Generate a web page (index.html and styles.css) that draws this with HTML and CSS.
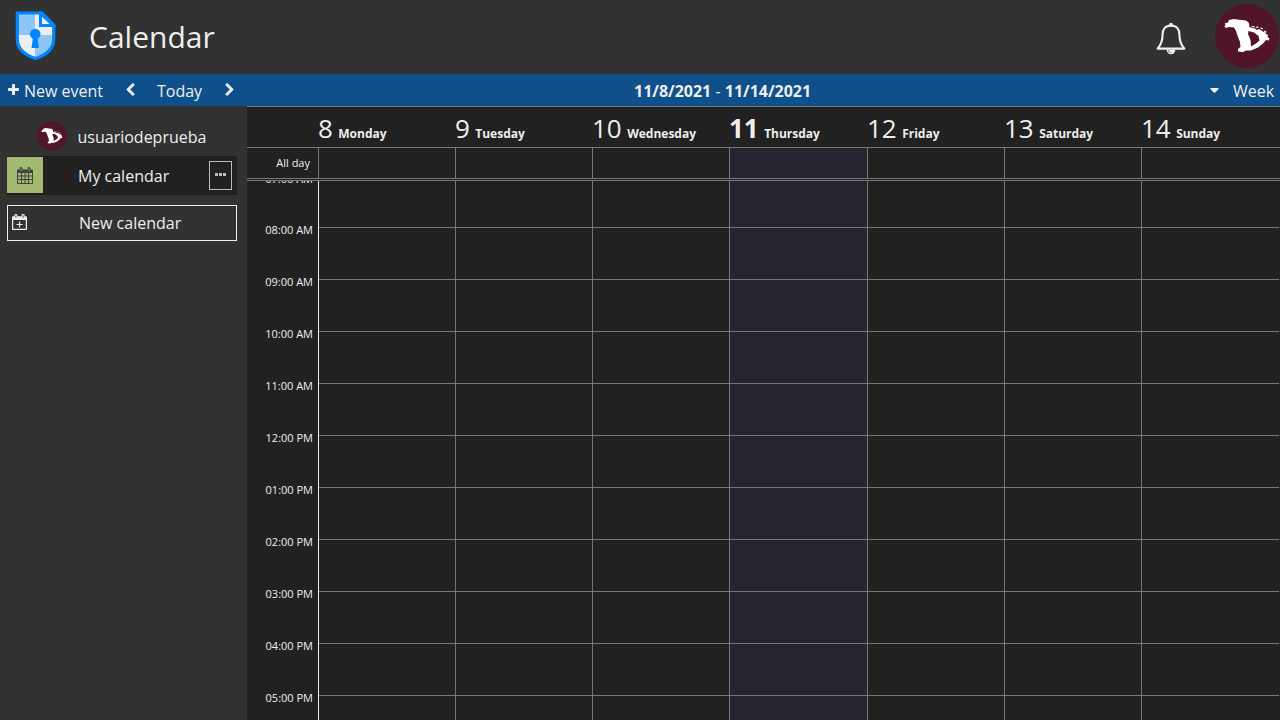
FILE: index.html
```html
<!DOCTYPE html>
<html lang="en">
<head>
<meta charset="utf-8">
<title>Calendar</title>
<link rel="stylesheet" href="styles.css">
</head>
<body>
<svg class="defs" aria-hidden="true">
  <symbol id="avatar" viewBox="0 0 64 64">
    <circle cx="32" cy="32" r="32" fill="#51152b"/>
    <path fill="#fff" fill-rule="evenodd" d="M9.500 22.500L10.500 20.500 9.500 19.500 13 18.500 14 16 19 15 26 16 31 16.500 33.500 18.500 34.500 21 34 23 40 24.500 42 26 44 25 47 27 50 28.500 51 30 53 31 52.500 33 54.500 34.500 53.500 36.500 51 36 48 39.500 43 43.500 36 46.500 31 46.500 28 48 23 47.500 23 45 25.500 43 25 38 23 33 21 27 19 23.500 14 23 11 24ZM33.500 27L33 30 35.500 36 36 42.500 41 39.500 44.500 36.500 43.500 32 39 28.500Z"/>
    <path fill="#fff" d="M36 22l4 .5v1l-3-.5zM41 23l2-.8.5 1.500-2 .3zM45 23.500l2.500.5.500 1.500-2-.5zM49 26.500l2 .5.500 2-2-.7z"/>
  </symbol>
</svg>
<header class="top">
  <svg class="logo" viewBox="0 0 41 50">
    <path d="M2 2H27L39 14V29Q39 41 20.500 47.500Q2 41 2 29Z" fill="#eee"/>
    <path d="M2 2H20V24H2ZM20 24H39V29Q39 41 20 47.500Z" fill="#8fc5f5"/>
    <path d="M2.300 2H27L38.700 14V28C38.700 38 31 44 20.500 47.500C10 44 2.300 38 2.300 28Z" fill="none" stroke="#0087ff" stroke-width="3.200"/>
    <path d="M25.500 2.500V14.500H38.500Z" fill="#eee" stroke="#0087ff" stroke-width="3"/>
    <circle cx="20.200" cy="23" r="5.300" fill="#0087ff"/>
    <path d="M18 26h4.500l1.300 11h-7.300z" fill="#0087ff"/>
  </svg>
  <h1 class="title">Calendar</h1>
  <svg class="bell" viewBox="0 0 30 33">
    <path d="M15 3.600C9 3.600 6.600 7.500 6.600 12.500C6.600 19 5 23 1.600 26.600H28.400C25 23 23.400 19 23.400 12.500C23.400 7.500 21 3.600 15 3.600Z" fill="none" stroke="#eee" stroke-width="2.100" stroke-linejoin="round"/>
    <circle cx="15" cy="2.600" r="1.900" fill="#eee"/>
    <path d="M10.600 27.500h8.800a4.400 4.800 0 0 1-8.800 0z" fill="#eee"/>
    <path d="M12.300 28q.3 2.500 2.700 2.700" stroke="#323232" fill="none" stroke-width=".6"/>
  </svg>
  <svg class="avatar"><use href="#avatar"/></svg>
</header>
<nav class="toolbar">
  <svg class="plus" viewBox="192 128 1408 1408"><path d="M1600 736v192q0 40-28 68t-68 28h-416v416q0 40-28 68t-68 28h-192q-40 0-68-28t-28-68v-416h-416q-40 0-68-28t-28-68v-192q0-40 28-68t68-28h416v-416q0-40 28-68t68-28h192q40 0 68 28t28 68v416h416q40 0 68 28t28 68z"/></svg>
  <span class="new-event">New event</span>
  <svg class="prev" viewBox="410 26 1036 1612"><path d="M1427 301l-531 531 531 531q19 19 19 45t-19 45l-166 166q-19 19-45 19t-45-19l-742-742q-19-19-19-45t19-45l742-742q19-19 45-19t45 19l166 166q19 19 19 45t-19 45z"/></svg>
  <span class="today">Today</span>
  <svg class="next" viewBox="346 26 1036 1612"><path d="M1363 877l-742 742q-19 19-45 19t-45-19l-166-166q-19-19-19-45t19-45l531-531-531-531q-19-19-19-45t19-45l166-166q19-19 45-19t45 19l742 742q19 19 19 45t-19 45z"/></svg>
  <span class="range"><b>11/8/2021</b> - <b>11/14/2021</b></span>
  <svg class="caret" viewBox="0 0 9 5"><path d="M.8 0H8.200Q9 .2 8.600.9L5 4.700Q4.500 5 4 4.700L.4.900Q0 .2.800 0z"/></svg>
  <span class="view">Week</span>
</nav>
<div class="body">
  <aside class="side">
    <div class="user"><svg class="mini"><use href="#avatar"/></svg><span>usuariodeprueba</span></div>
    <div class="cal">
      <span class="swatch"><svg class="cal-icon" viewBox="0 0 16 17">
        <path fill="#424242" fill-rule="evenodd" d="M1 2.500H2.500V1.500Q2.500 0 4 0T5.500 1.500V2.500H10.500V1.500Q10.500 0 12 0T13.500 1.500V2.500H15Q16 2.500 16 3.500V16Q16 17 15 17H1Q0 17 0 16V3.500Q0 2.500 1 2.500ZM1 6V8.500H4V6ZM5 6V8.500H7.500V6ZM8.500 6V8.500H11V6ZM12 6V8.500H15V6ZM1 9.500V12H4V9.500ZM5 9.500V12H7.500V9.500ZM8.500 9.500V12H11V9.500ZM12 9.500V12H15V9.500ZM1 13V16H4V13ZM5 13V16H7.500V13ZM8.500 13V16H11V13ZM12 13V16H15V13ZM3.600 1.200V4H4.400V1.200ZM11.600 1.200V4H12.400V1.200Z"/>
      </svg></span>
      <span class="cal-name">My calendar</span>
      <span class="more"><i></i><i></i><i></i></span>
    </div>
    <div class="new-cal">
      <svg class="add-icon" viewBox="0 0 15 16">
        <path fill="#eee" fill-rule="evenodd" d="M1 2.300H2.300V1.400Q2.300 0 3.900 0T5.500 1.400V2.300H9.500V1.400Q9.500 0 11.100 0T12.700 1.400V2.300H14Q15 2.300 15 3.300V15Q15 16 14 16H1Q0 16 0 15V3.300Q0 2.300 1 2.300ZM1.200 6V14.800H13.800V6ZM3.500 1.300V4H4.300V1.300ZM10.700 1.300V4H11.500V1.300Z"/>
        <path fill="#eee" d="M7 7.500h1.100v2.400h2.500V11H8.100v2.500H7V11H4.500V9.900H7z"/>
      </svg>
      <span>New calendar</span>
    </div>
  </aside>
  <main class="week">
    <div class="row days">
      <div></div>
      <div class="day"><span class="num">8</span><span class="name">Monday</span></div>
      <div class="day"><span class="num">9</span><span class="name">Tuesday</span></div>
      <div class="day"><span class="num">10</span><span class="name">Wednesday</span></div>
      <div class="day now"><span class="num">11</span><span class="name">Thursday</span></div>
      <div class="day"><span class="num">12</span><span class="name">Friday</span></div>
      <div class="day"><span class="num">13</span><span class="name">Saturday</span></div>
      <div class="day"><span class="num">14</span><span class="name">Sunday</span></div>
    </div>
    <div class="row allday">
      <div class="label">All day</div>
      <div class="cell"></div><div class="cell"></div><div class="cell"></div><div class="cell now"></div><div class="cell"></div><div class="cell"></div><div class="cell"></div>
    </div>
    <div class="gap"></div>
    <div class="row grid">
      <div class="hours">
        <span>07:00 AM</span><span>08:00 AM</span><span>09:00 AM</span><span>10:00 AM</span><span>11:00 AM</span><span>12:00 PM</span><span>01:00 PM</span><span>02:00 PM</span><span>03:00 PM</span><span>04:00 PM</span><span>05:00 PM</span>
      </div>
      <div class="col first"></div><div class="col"></div><div class="col"></div><div class="col now"></div><div class="col"></div><div class="col"></div><div class="col last"></div>
    </div>
  </main>
</div>
</body>
</html>
```
FILE: styles.css
```css
* { box-sizing: border-box; }
body { margin: 0; width: 1280px; height: 720px; overflow: hidden; display: flex; flex-direction: column; background: #212121; color: #eee; font: 16px/24px "Open Sans", sans-serif; }
svg { display: block; flex: none; }
.defs { display: none; }
.top { height: 74px; flex: none; display: flex; align-items: flex-start; background: #323232; }
.logo { width: 41px; height: 50px; margin: 11px 0 0 15px; }
.title { margin: 15px 0 0 33px; font-size: 30px; font-weight: 400; line-height: 44px; }
.bell { width: 30px; height: 33px; margin: 22px 29px 0 auto; }
.avatar { width: 64px; height: 64px; margin: 4px 1px 0 0; }
.toolbar { height: 32px; flex: none; display: flex; align-items: flex-start; background: #0f4f8a; padding-top: 5px; white-space: nowrap; fill: #eee; }
.plus { width: 11px; height: 11px; margin: 5px 5px 0 8px; }
.new-event { width: 102px; }
.prev, .next { width: 9px; height: 13px; margin-top: 4px; }
.today { margin: 0 22px 0 22px; width: 46px; }
.range { margin-left: 400px; width: 180px; }
.range b { font-weight: 700; }
.caret { width: 9px; height: 5px; margin: 9px 14px 0 auto; }
.view { width: 47px; }
.body { flex: 1; display: flex; min-height: 0; }
.side { width: 247px; flex: none; background: #323232; padding: 15px 10px 0 7px; }
.user { height: 35px; display: flex; padding-left: 30px; gap: 10.500px; }
.user span { padding-top: 4px; }
.mini { width: 30px; height: 30px; }
.cal { height: 39px; background: #212121; display: flex; padding: 1px 5px 0 0; }
.swatch { width: 36px; height: 36px; background: #a5ba71; display: flex; padding: 10px 0 0 10px; }
.cal-icon { width: 16px; height: 17px; }
.cal-name { margin: 7px auto 0 35px; }
.more { width: 23px; height: 29px; margin-top: 4px; border: 1px solid #bbb; display: flex; justify-content: center; gap: 1px; padding-top: 11px; }
.more i { width: 3px; height: 3px; background: #bbb; }
.new-cal { height: 36px; margin-top: 10px; border: 1px solid #eee; display: flex; padding: 5px 0 0 4px; }
.add-icon { width: 15px; height: 16px; margin: 3px 52px 0 0; }
.week { width: 1033px; display: flex; flex-direction: column; }
.row { display: grid; grid-template-columns: 71px 137px 137px 137px 138px 137px 137px 139px; flex: none; }
.days { height: 41px; border-top: 1px solid #777; }
.day { display: flex; align-items: baseline; gap: 5.400px; padding-top: 3px; white-space: nowrap; }
.num { font-size: 26px; line-height: 36px; }
.name { font-size: 12px; font-weight: 700; }
.day.now .num { font-weight: 700; }
.allday { height: 32px; border: solid #777; border-width: 1px 0; }
.label { font-size: 11px; line-height: 30px; text-align: right; padding-right: 8px; }
.cell { border-left: 1px solid #777; }
.now.cell, .now.col { background-color: #25252f; }
.gap { height: 1px; }
.week .grid { flex: 1; min-height: 0; overflow: hidden; border-top: 1px solid #777; }
.hours { font-size: 11px; display: flex; flex-direction: column; margin-top: -16px; text-align: right; padding-right: 5px; }
.hours span { height: 52px; flex: none; line-height: 26px; }
.hours span:first-child { position: relative; top: 1px; }
.col { border-left: 1px solid #777; background-image: linear-gradient(#777 1px, transparent 1px); background-size: 100% 52px; background-position: 0 46px; }
.col.first { border-left-color: #eee; }
.col.last { background-size: 137px 52px; background-repeat: repeat-y; }
```
